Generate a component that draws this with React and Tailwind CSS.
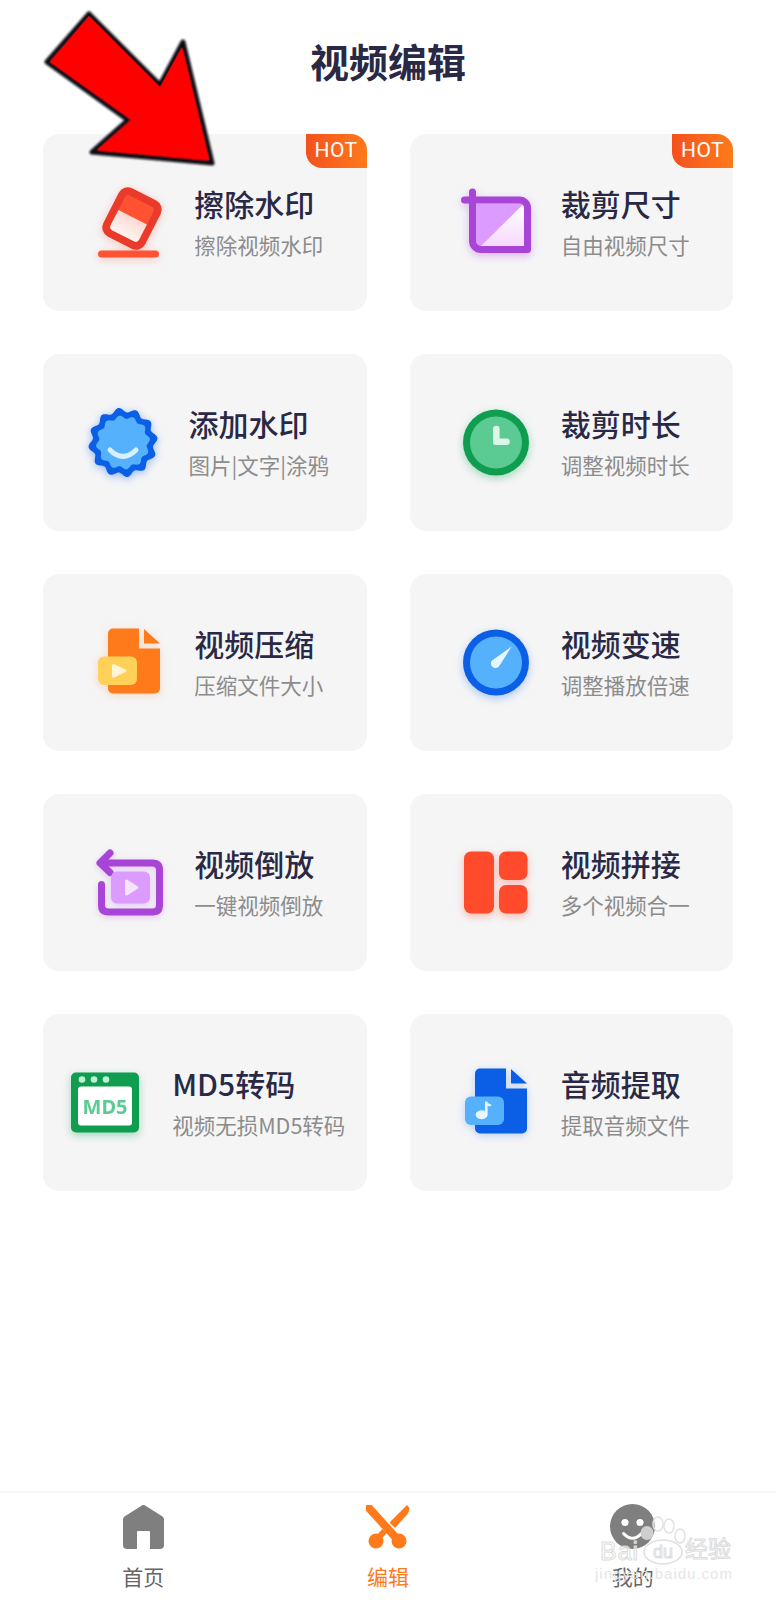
import React from 'react';

const CJK = "font-['Noto_Sans_CJK_SC','Noto_Sans',sans-serif]";

// wavy circle for the watermark badge
const scallop = (cx, cy, r, amp, n) => {
  const pts = [];
  for (let i = 0; i < 240; i++) {
    const a = (i / 240) * Math.PI * 2;
    const rr = r + amp * Math.cos(n * a + Math.PI / 2);
    pts.push(`${(cx + rr * Math.cos(a)).toFixed(2)} ${(cy + rr * Math.sin(a)).toFixed(2)}`);
  }
  return `M${pts.join('L')}Z`;
};

const IconBox = ({ shadow, children }) => (
  <svg viewBox="-1 0 80 80" className={`w-20 h-20 shrink-0 overflow-visible ${shadow}`}>
    {children}
  </svg>
);

const Eraser = () => (
  <IconBox shadow="drop-shadow-[0_2px_4px_rgba(255,82,51,0.3)]">
    <defs>
      <linearGradient id="er" x1="0" y1="0" x2="0" y2="1">
        <stop offset="0" stopColor="#fbd9d2" />
        <stop offset="1" stopColor="#fff4f2" />
      </linearGradient>
    </defs>
    <g transform="rotate(27 45 35.500)">
      <rect x="21.500" y="8.500" width="47" height="54" rx="10" fill="#ea3a2a" />
      <path d="M33 16H57a4 4 0 0 1 4 4V34H29V20a4 4 0 0 1 4-4Z" fill="#ff5233" />
      <path d="M29 34H61V51a4 4 0 0 1-4 4H33a4 4 0 0 1-4-4Z" fill="url(#er)" />
    </g>
    <rect x="11" y="67.500" width="61" height="7" rx="3.500" fill="#ff5233" />
  </IconBox>
);

const Crop = () => (
  <IconBox shadow="drop-shadow-[0_3px_4px_rgba(168,69,214,0.35)]">
    <defs>
      <linearGradient id="cr" x1="0" y1="0" x2="0" y2="1">
        <stop offset="0" stopColor="#ffffff" />
        <stop offset="1" stopColor="#f7d9ff" />
      </linearGradient>
    </defs>
    <path d="M22 20.500H70V63H27a5 5 0 0 1-5-5Z" fill="url(#cr)" />
    <path d="M22 20.500H70L27 63a5 5 0 0 1-5-5Z" fill="#dc9cff" />
    <path d="M18.500 9V58a8.500 8.500 0 0 0 8.500 8.500H73.500V25a8 8 0 0 0-8-8H10.500" fill="none" stroke="#a845d6" strokeWidth="7" strokeLinecap="round" strokeLinejoin="round" />
  </IconBox>
);

const Badge = () => (
  <IconBox shadow="drop-shadow-[0_2px_4px_rgba(10,95,230,0.4)]">
    <path d={scallop(42, 39.500, 32.500, 2.200, 12)} fill="#0a5fe6" />
    <path d={scallop(42, 39.500, 25.500, 1.600, 12)} fill="#55b1fb" />
    <path d="M29 47Q42 60 55 47" fill="none" stroke="#d6f0ff" strokeWidth="5" strokeLinecap="round" />
  </IconBox>
);

const Clock = () => (
  <IconBox shadow="drop-shadow-[0_3px_4px_rgba(15,157,79,0.35)]">
    <circle cx="42" cy="39.500" r="33" fill="#0f9d4f" />
    <circle cx="42" cy="39.500" r="26" fill="#5ccb93" />
    <path d="M39 26a3.300 3.300 0 0 1 6.600 0V35.500H52.500a3.300 3.300 0 0 1 0 6.600H42a3 3 0 0 1-3-3Z" fill="#dcf6e8" />
  </IconBox>
);

const FileIcon = ({ color, shadow, children, tile }) => (
  <IconBox shadow={shadow}>
    <path d="M26 5.500H52V25.500H73V65.500a5 5 0 0 1-5 5H26a5 5 0 0 1-5-5V10.500a5 5 0 0 1 5-5Z" fill={color} />
    <path d="M57 6L73 20.500H57Z" fill={color} />
    <rect x="11" y="33.500" width="39" height="28.500" rx="6" fill={tile} />
    {children}
  </IconBox>
);

const Gauge = () => (
  <IconBox shadow="drop-shadow-[0_3px_4px_rgba(10,95,230,0.3)]">
    <circle cx="42" cy="39.500" r="33" fill="#0a5fe6" />
    <circle cx="42" cy="39.500" r="26" fill="#55b1fb" />
    <path d="M57.700 23.500L45 43.500a4.600 4.600 0 0 1-7-6Z" fill="#e6f6ff" />
  </IconBox>
);

const Reverse = () => (
  <IconBox shadow="drop-shadow-[0_2px_3px_rgba(168,69,214,0.25)]">
    <path d="M14.500 41.500V62q0 7 7 7H65.500q7 0 7-7V27q0-7-7-7H14" fill="none" stroke="#a845d6" strokeWidth="7" strokeLinecap="round" />
    <path d="M23 10L13 20L23 29.500" fill="none" stroke="#a845d6" strokeWidth="7" strokeLinecap="round" strokeLinejoin="round" />
    <rect x="24" y="28.500" width="39" height="32" rx="6" fill="#dc9cff" />
    <path d="M38 38a1.500 1.500 0 0 1 2.300-1.300L50.500 43.200a1.500 1.500 0 0 1 0 2.600L40.300 52.300a1.500 1.500 0 0 1-2.300-1.300Z" fill="#f6e4ff" />
  </IconBox>
);

const Stitch = () => (
  <IconBox shadow="drop-shadow-[0_3px_4px_rgba(255,75,43,0.35)]">
    <rect x="10" y="8.500" width="30" height="62" rx="7" fill="#ff4b2b" />
    <rect x="45" y="8.500" width="28.500" height="28.500" rx="7" fill="#ff4b2b" />
    <rect x="45" y="42" width="28.500" height="28.500" rx="7" fill="#ff4b2b" />
  </IconBox>
);

const Md5 = () => (
  <IconBox shadow="drop-shadow-[0_3px_4px_rgba(15,157,79,0.35)]">
    <rect x="6" y="9.500" width="68" height="60" rx="5" fill="#0f9d4f" />
    <rect x="13" y="23.500" width="54" height="39" rx="3" fill="#ffffff" />
    <circle cx="17" cy="16.500" r="3.300" fill="#bff0d4" />
    <circle cx="29" cy="16.500" r="3.300" fill="#bff0d4" />
    <circle cx="41" cy="16.500" r="3.300" fill="#bff0d4" />
    <text x="40" y="50.500" textAnchor="middle" fontSize="20" fontWeight="700" fontFamily="'Noto Sans', sans-serif" fill="#5ccb93">MD5</text>
  </IconBox>
);

const items = [
  { title: '擦除水印', sub: '擦除视频水印', icon: <Eraser />, hot: true },
  { title: '裁剪尺寸', sub: '自由视频尺寸', icon: <Crop />, hot: true },
  { title: '添加水印', sub: '图片|文字|涂鸦', icon: <Badge /> },
  { title: '裁剪时长', sub: '调整视频时长', icon: <Clock /> },
  {
    title: '视频压缩',
    sub: '压缩文件大小',
    icon: (
      <FileIcon color="#ff7a1a" tile="#ffd159" shadow="drop-shadow-[0_2px_4px_rgba(255,122,26,0.25)]">
        <path d="M25 42.500a1.500 1.500 0 0 1 2.300-1.300L38.500 46.500a1.500 1.500 0 0 1 0 2.600L27.300 54.400a1.500 1.500 0 0 1-2.300-1.300Z" fill="#fff5d6" />
      </FileIcon>
    ),
  },
  { title: '视频变速', sub: '调整播放倍速', icon: <Gauge /> },
  { title: '视频倒放', sub: '一键视频倒放', icon: <Reverse /> },
  { title: '视频拼接', sub: '多个视频合一', icon: <Stitch /> },
  { title: 'MD5转码', sub: '视频无损MD5转码', icon: <Md5 /> },
  {
    title: '音频提取',
    sub: '提取音频文件',
    icon: (
      <FileIcon color="#0a5fe6" tile="#55b1fb" shadow="drop-shadow-[0_2px_4px_rgba(10,95,230,0.25)]">
        <path d="M31 38.500V48a6 4.500 0 1 0 2.600 4V42.500C35 44 37 43.500 37.500 41.500C35.500 41.500 33.500 40 33 38.500Z" fill="#eaf6ff" />
      </FileIcon>
    ),
  },
];

const Card = ({ title, sub, icon, hot }) => (
  <div className="relative h-[177px] rounded-2xl bg-[#f5f5f6] flex items-center justify-center gap-7">
    {hot && (
      <div className="absolute top-0 right-0 w-[61px] h-[34px] rounded-tr-2xl rounded-bl-2xl bg-gradient-to-r from-[#f4501e] to-[#ff7a1a] flex items-center justify-center text-white text-[21px] font-['Roboto',sans-serif] tracking-[0.5px]">
        HOT
      </div>
    )}
    {icon}
    <div className="pb-[2px]">
      <div className="text-[30px] leading-[38px] font-medium text-[#2a2945]">{title}</div>
      <div className="mt-[8px] text-[21.5px] leading-[30px] text-[#8c8c8c] whitespace-nowrap">{sub}</div>
    </div>
  </div>
);

const NavItem = ({ label, active, children }) => (
  <div className="flex-1 flex flex-col items-center">
    {children}
    <span className={`mt-[12px] text-[21px] leading-[30px] ${active ? 'text-[#ff7a1a]' : 'text-[#666666]'}`}>{label}</span>
  </div>
);

const Arrow = () => (
  <svg viewBox="0 0 240 180" className="absolute top-0 left-0 w-[240px] h-[180px]">
    <defs>
      <filter id="soft"><feGaussianBlur stdDeviation="1" /></filter>
    </defs>
    <path d="M89 14L160 85L183 42L212 163L92 152L128 120L47 62Z" fill="#fe0000" stroke="#0c0c14" strokeWidth="5" strokeLinejoin="round" filter="url(#soft)" />
    <path d="M89 16L160 87L182 47L209 160L97 150L132 120L50 62Z" fill="#fe0000" />
  </svg>
);

// jingyan watermark sitting on top of the nav bar
const Watermark = () => (
  <div className="absolute left-[595px] top-[1515px] w-[145px] h-[75px]">
    <svg viewBox="0 0 145 75" className="absolute inset-0 w-full h-full overflow-visible">
      <ellipse cx="52" cy="18" rx="6.500" ry="7" fill="#cfcfcf" />
      <ellipse cx="63" cy="9" rx="5" ry="7" fill="#ffffff" fillOpacity="0.4" stroke="#e2e2e2" strokeWidth="1.500" />
      <ellipse cx="74" cy="11" rx="5" ry="7" fill="#ffffff" fillOpacity="0.4" stroke="#e2e2e2" strokeWidth="1.500" />
      <ellipse cx="85" cy="21" rx="5" ry="7" fill="#ffffff" fillOpacity="0.4" stroke="#e2e2e2" strokeWidth="1.500" />
      <ellipse cx="68" cy="37" rx="19" ry="12" fill="#ffffff" fillOpacity="0.5" stroke="#e0e0e0" strokeWidth="1.500" />
    </svg>
    <span className="absolute left-[5px] top-[21px] text-[25px] leading-[30px] font-['Liberation_Sans',sans-serif] text-white/60 [-webkit-text-stroke:1px_#dcdcdc] tracking-[1px]">Bai</span>
    <span className="absolute left-[58px] top-[26px] text-[18px] leading-[22px] font-['Liberation_Sans',sans-serif] text-white/60 [-webkit-text-stroke:1px_#dcdcdc]">du</span>
    <span className="absolute left-[90px] top-[18px] text-[23px] leading-[28px] text-white/60 [-webkit-text-stroke:1px_#dcdcdc] whitespace-nowrap">经验</span>
    <span className="absolute left-0 top-[50px] text-[15px] leading-[18px] font-['Liberation_Sans',sans-serif] text-[#e6e6e6] tracking-[1px] whitespace-nowrap">jingyan.baidu.com</span>
  </div>
);

export default function App() {
  return (
    <div className={`relative h-[1600px] w-[776px] bg-white flex flex-col overflow-hidden ${CJK}`}>
      <div className="h-[134px] pt-[35px] text-center text-[39px] leading-[50px] font-bold text-[#2a2945]">视频编辑</div>

      <div className="grid grid-cols-2 gap-[43px] px-[43px]">
        {items.map((item) => (
          <Card key={item.title} {...item} />
        ))}
      </div>

      <div className="mt-auto h-[109px] border-t-2 border-[#f6f6f6] px-[21px] pt-[12px] flex">
        <NavItem label="首页">
          <svg viewBox="0 0 41 44" className="w-[41px] h-[44px]">
            <path d="M18.500 0.800a3 3 0 0 1 4 0L39.500 11.500a4 4 0 0 1 1.500 3V40a4 4 0 0 1-4 4H27V27a1 1 0 0 0-1-1H15a1 1 0 0 0-1 1V44H4a4 4 0 0 1-4-4V14.500a4 4 0 0 1 1.500-3Z" fill="#7f7f7f" />
          </svg>
        </NavItem>
        <NavItem label="编辑" active>
          <svg viewBox="0 0 44 44" className="w-[44px] h-[44px]">
            <path d="M2.500 2.500L32 35" fill="none" stroke="#ff7a1a" strokeWidth="8" strokeLinecap="round" />
            <circle cx="33" cy="36" r="7.500" fill="#ff7a1a" />
            <path d="M41 0L43.500 3C43.500 7 41 10 38 13L29 23L23.500 17.500L34 7Z" fill="#ff7a1a" />
            <path d="M18.500 26L9.500 36" fill="none" stroke="#ff7a1a" strokeWidth="6" />
            <circle cx="10" cy="36" r="7.500" fill="#ff7a1a" />
          </svg>
        </NavItem>
        <NavItem label="我的">
          <svg viewBox="0 0 45 44" className="w-[45px] h-[44px] overflow-visible">
            <circle cx="22.500" cy="21.500" r="22.500" fill="#7f7f7f" />
            <circle cx="15" cy="17.500" r="3.600" fill="#ffffff" />
            <circle cx="30" cy="17.500" r="3.600" fill="#ffffff" />
            <path d="M13.500 28.500Q22.500 38 31.500 28.500" fill="none" stroke="#ffffff" strokeWidth="3" strokeLinecap="round" />
          </svg>
        </NavItem>
      </div>

      <Arrow />
      <Watermark />
    </div>
  );
}
